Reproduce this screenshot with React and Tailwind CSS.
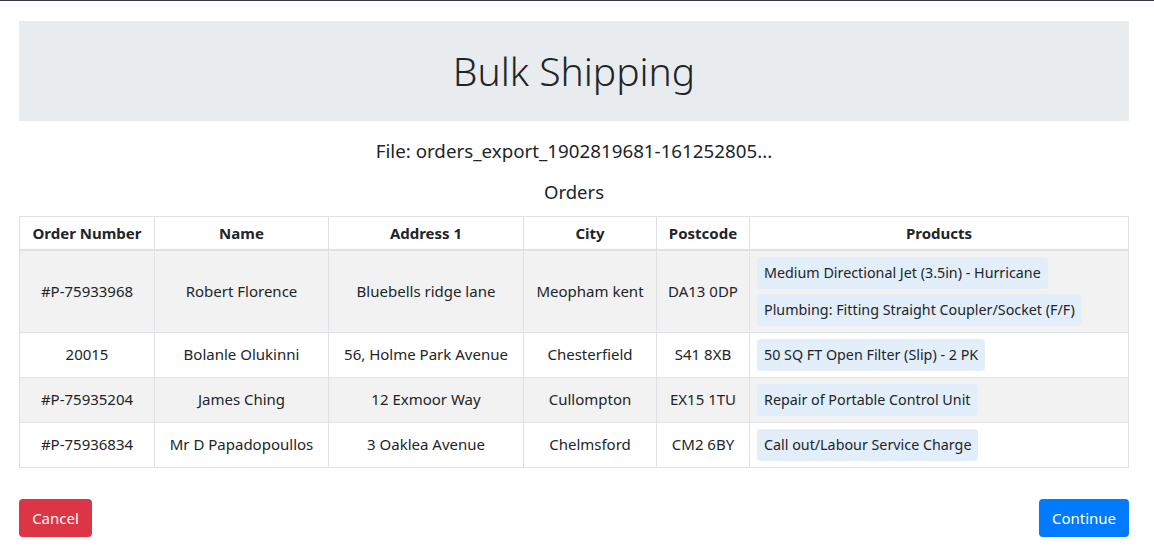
const orders = [
  {
    number: "#P-75933968",
    name: "Robert Florence",
    address: "Bluebells ridge lane",
    city: "Meopham kent",
    postcode: "DA13 0DP",
    products: ["Medium Directional Jet (3.5in) - Hurricane", "Plumbing: Fitting Straight Coupler/Socket (F/F)"],
  },
  {
    number: "20015",
    name: "Bolanle Olukinni",
    address: "56, Holme Park Avenue",
    city: "Chesterfield",
    postcode: "S41 8XB",
    products: ["50 SQ FT Open Filter (Slip) - 2 PK"],
  },
  {
    number: "#P-75935204",
    name: "James Ching",
    address: "12 Exmoor Way",
    city: "Cullompton",
    postcode: "EX15 1TU",
    products: ["Repair of Portable Control Unit"],
  },
  {
    number: "#P-75936834",
    name: "Mr D Papadopoullos",
    address: "3 Oaklea Avenue",
    city: "Chelmsford",
    postcode: "CM2 6BY",
    products: ["Call out/Labour Service Charge"],
  },
];

const cell = "border border-[#dee2e6] px-2 py-[6px] text-center align-middle";

export default function App() {
  return (
    <div className="min-h-[559px] border-t border-[#343a40] bg-white text-[#212529] font-['Segoe_UI','Noto_Sans',sans-serif] text-[15px]">
      <div className="ml-[19px] w-[1110px] pt-[20px]">
        <div className="flex h-[100px] items-center justify-center bg-[#e9ecef]">
          <h1 className="text-[39px] font-light leading-[48px]">Bulk Shipping</h1>
        </div>

        <h5 className="mt-[18px] text-center text-[18.75px] leading-[24px]">File: orders_export_1902819681-161252805...</h5>
        <h5 className="mt-[17px] text-center text-[18.5px] leading-[24px]">Orders</h5>

        <table className="mt-[12px] w-full table-fixed border-collapse">
          <colgroup>
            <col className="w-[135px]" />
            <col className="w-[174px]" />
            <col className="w-[195px]" />
            <col className="w-[133px]" />
            <col className="w-[93px]" />
            <col />
          </colgroup>
          <thead>
            <tr className="h-[33px]">
              {["Order Number", "Name", "Address 1", "City", "Postcode", "Products"].map((h) => (
                <th key={h} className="border border-b-2 border-[#dee2e6] px-2 py-[3px] text-center font-bold leading-[24px]">
                  {h}
                </th>
              ))}
            </tr>
          </thead>
          <tbody>
            {orders.map((o, i) => (
              <tr key={o.number} className={i % 2 === 0 ? "bg-[#f2f2f2]" : "bg-white"}>
                <td className={cell}>{o.number}</td>
                <td className={cell}>{o.name}</td>
                <td className={cell}>{o.address}</td>
                <td className={cell}>{o.city}</td>
                <td className={cell}>{o.postcode}</td>
                <td className="border border-[#dee2e6] px-[7px] py-[6px] align-middle">
                  <div className="flex flex-col items-start gap-[5px]">
                    {o.products.map((p) => (
                      <span key={p} className="rounded-[4px] bg-[#e2eef9] px-[7px] py-[4px] text-[14.3px] leading-[24px]">
                        {p}
                      </span>
                    ))}
                  </div>
                </td>
              </tr>
            ))}
          </tbody>
        </table>

        <div className="mt-[31px] flex justify-between">
          <button className="h-[38px] w-[73px] rounded-[4px] bg-[#dc3545] text-white leading-[24px]">Cancel</button>
          <button className="h-[38px] w-[90px] rounded-[4px] bg-[#007bff] text-white leading-[24px]">Continue</button>
        </div>
      </div>
    </div>
  );
}
